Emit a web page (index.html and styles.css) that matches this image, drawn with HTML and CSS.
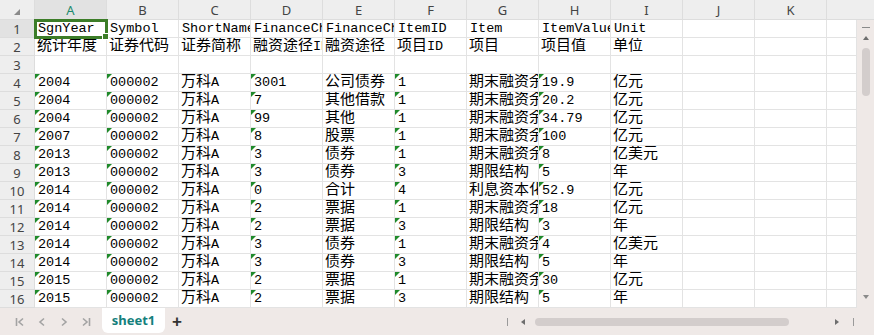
FILE: index.html
```html
<!DOCTYPE html>
<html lang="zh-CN">

<head>
    <meta charset="UTF-8">
    <title>sheet1</title>
    <link rel="stylesheet" href="styles.css">
</head>

<body>
    <div class="book">
        <div class="sheet" id="sheet"></div>

        <div class="bar">
            <div class="nav">
                <svg width="10" height="10" viewBox="0 0 10 10"><path d="M1.5 1v8M8 1.5 4 5l4 3.5" /></svg>
                <svg width="10" height="10" viewBox="0 0 10 10"><path d="M7 1.5 3 5l4 3.5" /></svg>
                <svg width="10" height="10" viewBox="0 0 10 10"><path d="M3 1.5 7 5 3 8.5" /></svg>
                <svg width="10" height="10" viewBox="0 0 10 10"><path d="M2 1.5 6 5 2 8.5M8.5 1v8" /></svg>
            </div>
            <div class="tab">sheet1</div>
            <div class="add">+</div>
            <div class="hscroll">
                <span class="tick"></span>
                <span class="arrow-left"></span>
                <span class="thumb"></span>
                <span class="arrow-right"></span>
                <span class="tick"></span>
            </div>
        </div>
    </div>

    <script>
        const letters = ["A", "B", "C", "D", "E", "F", "G", "H", "I", "J", "K"];
        // columns that hold numbers stored as text get the green corner mark
        const flagged = [0, 1, 3, 5, 7];

        const rows = [
            ["SgnYear", "Symbol", "ShortName", "FinanceChannelID", "FinanceChannel", "ItemID", "Item", "ItemValue", "Unit"],
            ["统计年度", "证券代码", "证券简称", "融资途径ID", "融资途径", "项目ID", "项目", "项目值", "单位"],
            [],
            ["2004", "000002", "万科A", "3001", "公司债券", "1", "期末融资余额", "19.9", "亿元"],
            ["2004", "000002", "万科A", "7", "其他借款", "1", "期末融资余额", "20.2", "亿元"],
            ["2004", "000002", "万科A", "99", "其他", "1", "期末融资余额", "34.79", "亿元"],
            ["2007", "000002", "万科A", "8", "股票", "1", "期末融资余额", "100", "亿元"],
            ["2013", "000002", "万科A", "3", "债券", "1", "期末融资余额", "8", "亿美元"],
            ["2013", "000002", "万科A", "3", "债券", "3", "期限结构", "5", "年"],
            ["2014", "000002", "万科A", "0", "合计", "4", "利息资本化金额", "52.9", "亿元"],
            ["2014", "000002", "万科A", "2", "票据", "1", "期末融资余额", "18", "亿元"],
            ["2014", "000002", "万科A", "2", "票据", "3", "期限结构", "3", "年"],
            ["2014", "000002", "万科A", "3", "债券", "1", "期末融资余额", "4", "亿美元"],
            ["2014", "000002", "万科A", "3", "债券", "3", "期限结构", "5", "年"],
            ["2015", "000002", "万科A", "2", "票据", "1", "期末融资余额", "30", "亿元"],
            ["2015", "000002", "万科A", "2", "票据", "3", "期限结构", "5", "年"]
        ];

        function cell(className, html) {
            const div = document.createElement("div");
            div.className = className;
            div.innerHTML = html;
            return div;
        }

        function wrapHan(text) {
            return text.replace(/([\u4e00-\u9fff]+)/g, '<span class="han">$1</span>');
        }

        function renderSheet() {
            const sheet = document.getElementById("sheet");

            sheet.appendChild(cell("corner", ""));
            letters.forEach((letter, i) => {
                sheet.appendChild(cell(i === 0 ? "col-head active" : "col-head", letter));
            });
            sheet.appendChild(cell("col-head rest", ""));

            rows.forEach((row, r) => {
                sheet.appendChild(cell(r === 0 ? "row-head active" : "row-head", r + 1));
                for (let c = 0; c < 12; c++) {
                    let className = "cell";
                    const value = row[c] || "";
                    if (r >= 3 && flagged.includes(c)) className += " flag";
                    if (r === 0 && c === 0) className += " selected";
                    sheet.appendChild(cell(className, wrapHan(value)));
                }
            });

            const vscroll = cell("vscroll", '<span class="dash"></span><span class="up"></span><span class="vthumb"></span><span class="down"></span>');
            sheet.appendChild(vscroll);
        }

        renderSheet();
    </script>
</body>

</html>
```

FILE: styles.css
```css
body {
    margin: 0;
    background-color: #ffffff;
    font-family: "Liberation Mono", "Noto Sans CJK SC", monospace;
    overflow: hidden;
}

.book {
    width: 874px;
    height: 335px;
    display: flex;
    flex-direction: column;
}

.sheet {
    display: grid;
    grid-template-columns: 35px repeat(11, 72px) 30px 17px;
    grid-template-rows: 20px repeat(16, 18px);
    height: 308px;
}

.corner,
.col-head,
.row-head {
    background-color: #eeeeee;
    color: #444444;
    font-family: "Noto Sans", "Liberation Sans", sans-serif;
    font-size: 13px;
    display: flex;
    align-items: center;
    justify-content: center;
    box-sizing: border-box;
    border-right: 1px solid #dddddd;
    border-bottom: 1px solid #dddddd;
}

.corner {
    position: relative;
}

.corner::after {
    content: "";
    position: absolute;
    left: 14px;
    top: 9px;
    border-bottom: 6px solid #8a8a8a;
    border-left: 6px solid transparent;
}

.col-head.rest {
    grid-column: span 2;
    border-right: none;
}

.col-head.active {
    background-color: #e2e2e2;
    color: #1d8a6e;
}

.row-head.active {
    background-color: #e2e2e2;
}

.cell {
    position: relative;
    box-sizing: border-box;
    border-right: 1px solid #e3e3e3;
    border-bottom: 1px solid #e3e3e3;
    padding: 0 0 1px 3px;
    overflow: hidden;
    white-space: nowrap;
    display: flex;
    align-items: flex-end;
    font-size: 13.5px;
    line-height: 15px;
    color: #000000;
}

.han {
    font-size: 15px;
    line-height: 15px;
    margin-left: -1px;
}

.cell.flag::before {
    content: "";
    position: absolute;
    left: 0;
    top: 0;
    border-top: 5px solid #1f8a2a;
    border-right: 5px solid transparent;
}

.cell.selected {
    overflow: visible;
    z-index: 2;
}

.cell.selected::after {
    content: "";
    position: absolute;
    left: -1px;
    top: -1px;
    right: -2px;
    bottom: -2px;
    border: 3px solid #3c7d28;
}

.cell.selected::before {
    content: "";
    position: absolute;
    right: -3px;
    bottom: -3px;
    width: 5px;
    height: 5px;
    background-color: #3c7d28;
    border: 1px solid #ffffff;
    z-index: 1;
}

.vscroll {
    grid-column: 14;
    grid-row: 2 / span 16;
    background-color: #efe9e7;
    display: flex;
    flex-direction: column;
    align-items: center;
    padding-top: 7px;
}

.dash {
    width: 8px;
    height: 1px;
    background-color: #8a8a8a;
}

.up {
    margin-top: 8px;
    border-bottom: 4px solid #6e6e6e;
    border-left: 3px solid transparent;
    border-right: 3px solid transparent;
}

.vthumb {
    margin-top: 8px;
    width: 8px;
    height: 48px;
    border-radius: 4px;
    background-color: #d3cdcc;
}

.down {
    margin-top: auto;
    margin-bottom: 9px;
    border-top: 4px solid #8a8a8a;
    border-left: 3px solid transparent;
    border-right: 3px solid transparent;
}

.bar {
    flex: 1;
    display: flex;
    align-items: flex-start;
    background-color: #efe9e7;
}

.nav {
    display: flex;
    gap: 12px;
    padding: 9px 0 0 15px;
    width: 87px;
}

.nav svg {
    fill: none;
    stroke: #a3a3a3;
    stroke-width: 1.6;
}

.tab {
    width: 63px;
    height: 25px;
    background-color: #ffffff;
    border-radius: 0 0 6px 6px;
    color: #14807c;
    font-family: "Noto Sans", "Liberation Sans", sans-serif;
    font-weight: bold;
    font-size: 13px;
    line-height: 25px;
    text-align: center;
}

.add {
    margin-left: 7px;
    font-family: "Liberation Sans", sans-serif;
    font-weight: bold;
    font-size: 17px;
    line-height: 27px;
    color: #333333;
}

.hscroll {
    margin-left: auto;
    width: 367px;
    height: 27px;
    display: flex;
    align-items: center;
    padding-right: 19px;
    box-sizing: border-box;
}

.tick {
    width: 1px;
    height: 8px;
    background-color: #9a9a9a;
}

.arrow-left {
    margin-left: 13px;
    border-right: 4px solid #6e6e6e;
    border-top: 3px solid transparent;
    border-bottom: 3px solid transparent;
}

.thumb {
    margin-left: 10px;
    width: 254px;
    height: 8px;
    border-radius: 4px;
    background-color: #d3cdcc;
}

.arrow-right {
    margin-left: 46px;
    margin-right: 14px;
    border-left: 4px solid #6e6e6e;
    border-top: 3px solid transparent;
    border-bottom: 3px solid transparent;
}
```
